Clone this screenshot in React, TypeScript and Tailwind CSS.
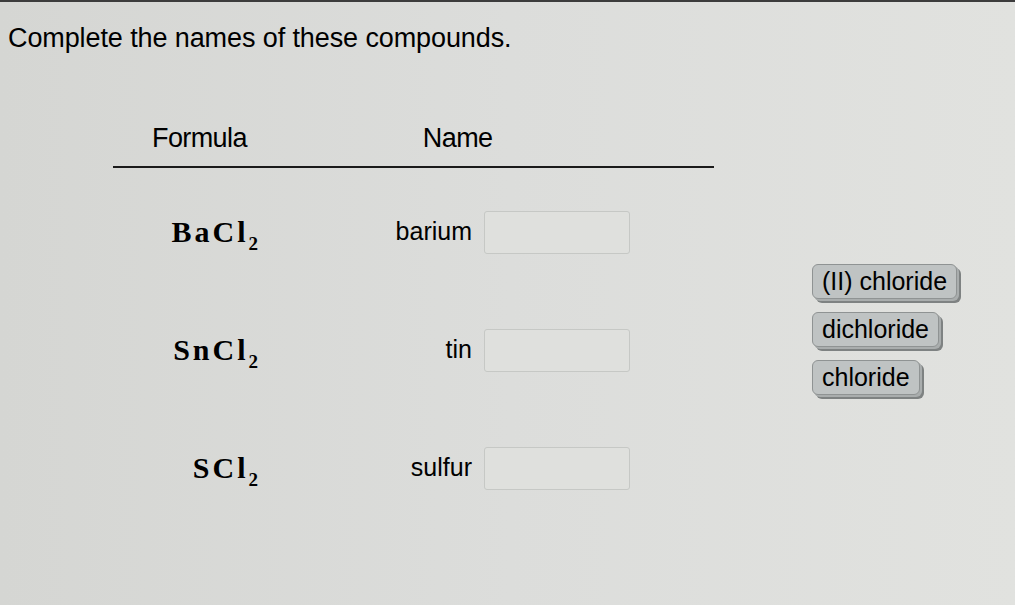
import React from 'react';

const rows = [
  { formula: 'BaCl', label: 'barium' },
  { formula: 'SnCl', label: 'tin' },
  { formula: 'SCl', label: 'sulfur' },
];

const chips = ['(II) chloride', 'dichloride', 'chloride'];

export default function App() {
  return (
    <main
      className="w-[1015px] h-[605px] overflow-hidden border-t-2 border-[#3c3c3c] bg-linear-to-r from-[#d5d6d3] via-[#dcdddb] to-[#e1e2df] text-black"
      style={{ fontFamily: '"Liberation Sans", Arial, sans-serif' }}
    >
      <h1 className="pl-[8px] pt-[19px] text-[27px] leading-[34px] font-normal tracking-[-0.1px]">
        Complete the names of these compounds.
      </h1>

      <div className="flex mt-[63px]">
        {/* Table */}
        <div className="ml-[113px] w-[601px]">
          <div className="h-[40px] flex items-center text-[27px] tracking-[-0.6px]">
            <span className="ml-[39px]">Formula</span>
            <span className="ml-[176px]">Name</span>
          </div>
          <div className="mt-[8px] border-t-2 border-[#1a1a1a]" />

          <div className="mt-[5px]">
            {rows.map(row => (
              <div key={row.label} className="h-[118px] flex items-center">
                <div
                  className="w-[145px] text-right font-bold text-[30px] tracking-[3px] leading-none"
                  style={{ fontFamily: '"Liberation Serif", "Times New Roman", serif' }}
                >
                  {row.formula}
                  <span className="relative top-[8px] text-[19px] tracking-normal">2</span>
                </div>
                <div className="w-[214px] text-right text-[25px] leading-none pb-[2px]">{row.label}</div>
                <div className="ml-[12px] w-[146px] h-[43px] rounded-[3px] border border-[#c6c8c5] bg-[#dfe0dd]" />
              </div>
            ))}
          </div>
        </div>

        {/* Answer bank */}
        <div className="ml-[98px] pt-[146px] flex flex-col items-start gap-[13px]">
          {chips.map(chip => (
            <div
              key={chip}
              className="h-[35px] px-[9px] flex items-center rounded-[6px] border border-[#8f9393] bg-[#bfc3c3] text-[25px] leading-none shadow-[2px_2px_0_#a9adad,4px_4px_0_#7e8282]"
            >
              {chip}
            </div>
          ))}
        </div>
      </div>
    </main>
  );
}
